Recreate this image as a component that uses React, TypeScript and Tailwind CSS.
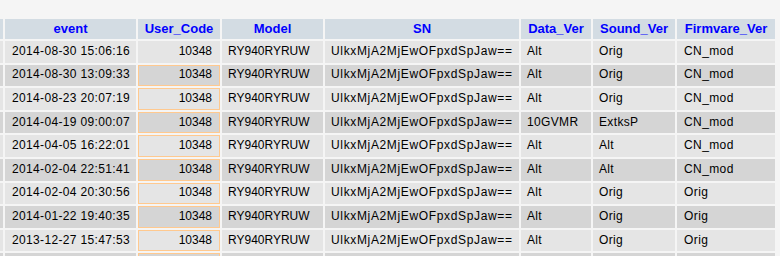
import React from "react";

const ROWS = [
  { event: "2014-08-30 15:06:16", data: "Alt", sound: "Orig", fw: "CN_mod", mark: false },
  { event: "2014-08-30 13:09:33", data: "Alt", sound: "Orig", fw: "CN_mod", mark: true },
  { event: "2014-08-23 20:07:19", data: "Alt", sound: "Orig", fw: "CN_mod", mark: true },
  { event: "2014-04-19 09:00:07", data: "10GVMR", sound: "ExtksP", fw: "CN_mod", mark: true },
  { event: "2014-04-05 16:22:01", data: "Alt", sound: "Alt", fw: "CN_mod", mark: true },
  { event: "2014-02-04 22:51:41", data: "Alt", sound: "Alt", fw: "CN_mod", mark: true },
  { event: "2014-02-04 20:30:56", data: "Alt", sound: "Orig", fw: "Orig", mark: true },
  { event: "2014-01-22 19:40:35", data: "Alt", sound: "Orig", fw: "Orig", mark: true },
  { event: "2013-12-27 15:47:53", data: "Alt", sound: "Orig", fw: "Orig", mark: true },
];

const HEADERS = ["event", "User_Code", "Model", "SN", "Data_Ver", "Sound_Ver", "Firmvare_Ver"];

export default function App() {
  return (
    <div className="w-[780px] h-[256px] overflow-hidden bg-[#f5f5f5] pt-[19px] text-[12px] text-black font-['Liberation_Sans',Arial,sans-serif]">
      <div className="grid grid-cols-[3px_131px_82px_101px_194px_70px_82px_98px] auto-rows-[21.6px] grid-rows-[20px] gap-[2px]">
        {/* header */}
        <div className="bg-[#d3dce3]" />
        {HEADERS.map((h) => (
          <div key={h} className="bg-[#d3dce3] flex items-center justify-center text-[13px] font-bold text-[#0000ff]">
            {h}
          </div>
        ))}

        {ROWS.map((r, i) => {
          const bg = i % 2 === 0 ? "bg-[#e5e5e5]" : "bg-[#d5d5d5]";
          return (
            <React.Fragment key={r.event}>
              <div className={bg} />
              <div className={`${bg} flex items-center pl-[7px] pb-[2px] tracking-[0.35px]`}>{r.event}</div>
              <div
                className={`${bg} flex items-center justify-end pr-[7px] pb-[2px] border ${
                  r.mark ? "border-[#ffc98f]" : "border-transparent"
                }`}
              >
                10348
              </div>
              <div className={`${bg} flex items-center pl-[6px] pb-[2px]`}>RY940RYRUW</div>
              <div className={`${bg} flex items-center pl-[6px] pb-[2px] tracking-[0.65px]`}>UlkxMjA2MjEwOFpxdSpJaw==</div>
              <div className={`${bg} flex items-center pl-[6px] pb-[2px] tracking-[0.35px]`}>{r.data}</div>
              <div className={`${bg} flex items-center pl-[6px] pb-[2px] tracking-[0.35px]`}>{r.sound}</div>
              <div className={`${bg} flex items-center pl-[7px] pb-[2px] tracking-[0.4px]`}>{r.fw}</div>
            </React.Fragment>
          );
        })}

        {/* next row, cut off by the window */}
        <div className="bg-[#d5d5d5]" />
        <div className="bg-[#d5d5d5]" />
        <div className="bg-[#d5d5d5] border border-[#ffc98f]" />
        <div className="bg-[#d5d5d5]" />
        <div className="bg-[#d5d5d5]" />
        <div className="bg-[#d5d5d5]" />
        <div className="bg-[#d5d5d5]" />
        <div className="bg-[#d5d5d5]" />
      </div>
    </div>
  );
}
